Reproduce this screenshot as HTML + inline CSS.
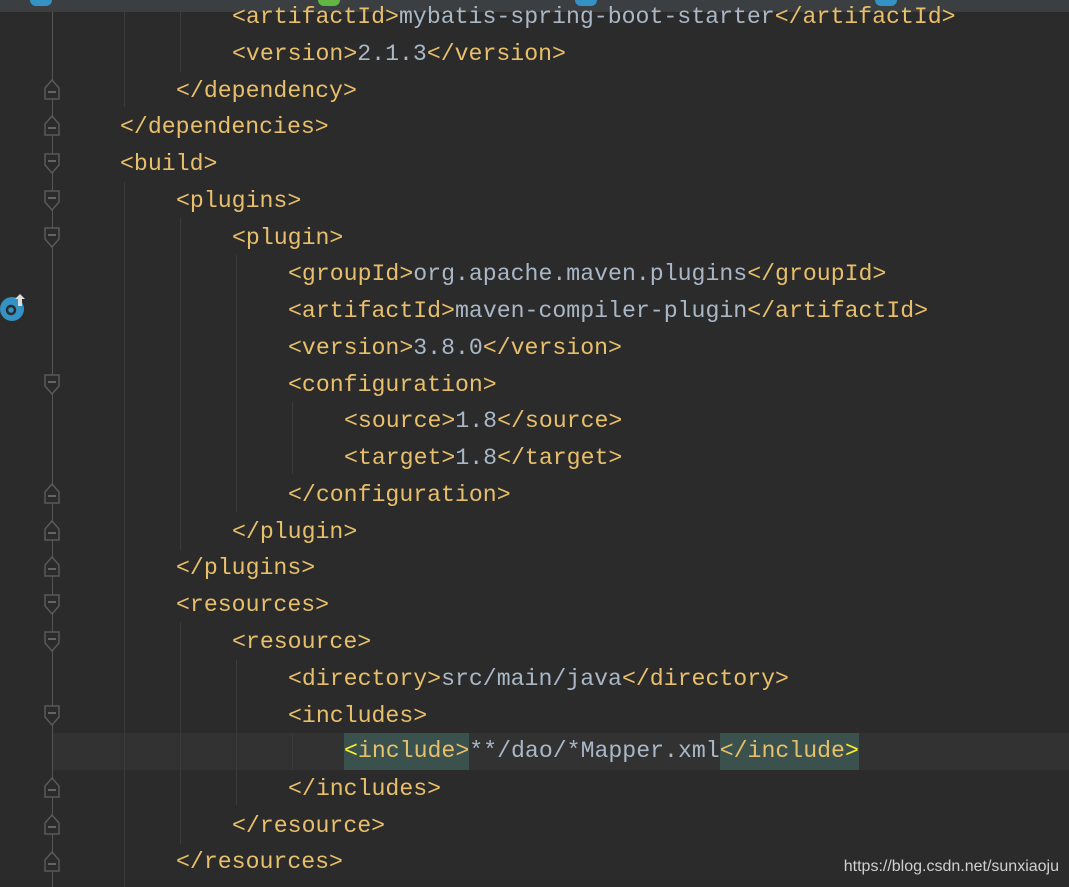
<!DOCTYPE html>
<html><head><meta charset="utf-8"><style>
body{margin:0;width:1069px;height:887px;background:#2b2b2b;overflow:hidden;position:relative;font-family:"Liberation Mono",monospace;}
.top{position:absolute;left:0;top:0;width:1069px;height:12px;background:#3c3f41;}
.ln{position:absolute;left:0;height:36.75px;line-height:36.75px;font-size:23.2px;white-space:pre;color:#e8bf6a;margin-top:1px;}
.v{color:#a9b7c6}
.g{position:absolute;width:1px;background:#3b3b3b;}
.hl{position:absolute;left:52px;top:733px;width:1017px;height:37px;background:#323232;}
.wm{position:absolute;right:10px;top:858px;font-family:"Liberation Sans",sans-serif;font-size:16px;color:#d0d0d0;}
</style></head><body>
<div class="top"></div>
<div style="position:absolute;left:30px;top:0;width:22px;height:6px;border-radius:0 0 11px 11px;background:#3592c4"></div>
<div style="position:absolute;left:318px;top:0;width:22px;height:6px;border-radius:0 0 11px 11px;background:#62b543"></div>
<div style="position:absolute;left:575px;top:0;width:22px;height:6px;border-radius:0 0 11px 11px;background:#3592c4"></div>
<div style="position:absolute;left:875px;top:0;width:22px;height:6px;border-radius:0 0 11px 11px;background:#3592c4"></div>
<div class="hl"></div>
<div class="g" style="left:52px;top:12px;height:875px;background:#555"></div>
<div class="g" style="left:124px;top:12px;height:95px"></div>
<div class="g" style="left:124px;top:182px;height:705px"></div>
<div class="g" style="left:180px;top:12px;height:60px"></div>
<div class="g" style="left:180px;top:218px;height:332px"></div>
<div class="g" style="left:180px;top:622px;height:222px"></div>
<div class="g" style="left:236px;top:255px;height:257px"></div>
<div class="g" style="left:236px;top:660px;height:145px"></div>
<div class="g" style="left:292px;top:402px;height:72px"></div>
<div class="g" style="left:292px;top:733px;height:37px"></div>
<svg style="position:absolute;left:0;top:0" width="70" height="887">
<g fill="#2b2b2b" stroke="#5a5a5a" stroke-width="1.5">
<path d="M45 99 V88 L52 80 L59 88 V99 Z"/><path d="M45 135 V124 L52 116 L59 124 V135 Z"/>
<path d="M45 154 V165 L52 173 L59 165 V154 Z"/><path d="M45 191 V202 L52 210 L59 202 V191 Z"/><path d="M45 228 V239 L52 247 L59 239 V228 Z"/>
<path d="M45 375 V386 L52 394 L59 386 V375 Z"/>
<path d="M45 503 V492 L52 484 L59 492 V503 Z"/><path d="M45 540 V529 L52 521 L59 529 V540 Z"/><path d="M45 576 V565 L52 557 L59 565 V576 Z"/>
<path d="M45 595 V606 L52 614 L59 606 V595 Z"/><path d="M45 632 V643 L52 651 L59 643 V632 Z"/><path d="M45 706 V717 L52 725 L59 717 V706 Z"/>
<path d="M45 797 V786 L52 778 L59 786 V797 Z"/><path d="M45 834 V823 L52 815 L59 823 V834 Z"/><path d="M45 871 V860 L52 852 L59 860 V871 Z"/>
</g>
<g stroke="#777" stroke-width="1.5">
<path d="M48 92h8M48 128h8M48 161h8M48 198h8M48 235h8M48 382h8M48 496h8M48 533h8M48 569h8M48 602h8M48 639h8M48 713h8M48 790h8M48 827h8M48 864h8"/>
</g>
<circle cx="12" cy="309" r="12" fill="#3592c4"/><circle cx="11" cy="310" r="4" fill="none" stroke="#2b2b2b" stroke-width="2.5"/>
<path d="M20 294 l-5 5 h3 v7 h4 v-7 h3 z" fill="#ddd"/>
</svg>
<div class="ln" style="top:-2px;left:232px">&lt;artifactId&gt;<span class="v">mybatis-spring-boot-starter</span>&lt;/artifactId&gt;</div>
<div class="ln" style="top:35px;left:232px">&lt;version&gt;<span class="v">2.1.3</span>&lt;/version&gt;</div>
<div class="ln" style="top:72px;left:176px">&lt;/dependency&gt;</div>
<div class="ln" style="top:108px;left:120px">&lt;/dependencies&gt;</div>
<div class="ln" style="top:145px;left:120px">&lt;build&gt;</div>
<div class="ln" style="top:182px;left:176px">&lt;plugins&gt;</div>
<div class="ln" style="top:219px;left:232px">&lt;plugin&gt;</div>
<div class="ln" style="top:255px;left:288px">&lt;groupId&gt;<span class="v">org.apache.maven.plugins</span>&lt;/groupId&gt;</div>
<div class="ln" style="top:292px;left:288px">&lt;artifactId&gt;<span class="v">maven-compiler-plugin</span>&lt;/artifactId&gt;</div>
<div class="ln" style="top:329px;left:288px">&lt;version&gt;<span class="v">3.8.0</span>&lt;/version&gt;</div>
<div class="ln" style="top:366px;left:288px">&lt;configuration&gt;</div>
<div class="ln" style="top:402px;left:344px">&lt;source&gt;<span class="v">1.8</span>&lt;/source&gt;</div>
<div class="ln" style="top:439px;left:344px">&lt;target&gt;<span class="v">1.8</span>&lt;/target&gt;</div>
<div class="ln" style="top:476px;left:288px">&lt;/configuration&gt;</div>
<div class="ln" style="top:513px;left:232px">&lt;/plugin&gt;</div>
<div class="ln" style="top:549px;left:176px">&lt;/plugins&gt;</div>
<div class="ln" style="top:586px;left:176px">&lt;resources&gt;</div>
<div class="ln" style="top:623px;left:232px">&lt;resource&gt;</div>
<div class="ln" style="top:660px;left:288px">&lt;directory&gt;<span class="v">src/main/java</span>&lt;/directory&gt;</div>
<div class="ln" style="top:697px;left:288px">&lt;includes&gt;</div>
<div class="ln" style="top:732px;left:344px"><span style="background:#3b514d;display:inline-block;height:37px"><span style="color:#ffef28">&lt;</span>include&gt;</span><span class="v">**/dao/*Mapper.xml</span><span style="background:#3b514d;display:inline-block;height:37px">&lt;/include<span style="color:#ffef28">&gt;</span></span></div>
<div class="ln" style="top:770px;left:288px">&lt;/includes&gt;</div>
<div class="ln" style="top:807px;left:232px">&lt;/resource&gt;</div>
<div class="ln" style="top:843px;left:176px">&lt;/resources&gt;</div>
<div class="wm">https://blog.csdn.net/sunxiaoju</div>
</body></html>
